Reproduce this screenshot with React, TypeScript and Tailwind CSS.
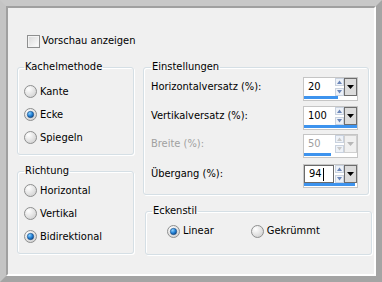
import React from 'react';

function Radio({ checked, disabled }: { checked?: boolean; disabled?: boolean }) {
  return (
    <svg width="13" height="13" viewBox="0 0 13 13" className="shrink-0">
      <defs>
        <radialGradient id="rfill" cx="0.35" cy="0.3" r="0.8">
          <stop offset="0" stopColor="#ffffff" />
          <stop offset="1" stopColor="#cfcfcf" />
        </radialGradient>
        <radialGradient id="rdot" cx="0.35" cy="0.3" r="0.8">
          <stop offset="0" stopColor="#8fd3ff" />
          <stop offset="0.55" stopColor="#1f7fd6" />
          <stop offset="1" stopColor="#0b3f7a" />
        </radialGradient>
      </defs>
      <circle cx="6.5" cy="6.5" r="6" fill="url(#rfill)" stroke={disabled ? '#c4c4c4' : '#8e8f8f'} strokeWidth="1" />
      {checked && <circle cx="6.5" cy="6.5" r="3.2" fill="url(#rdot)" stroke="#1c4a7d" strokeWidth="0.6" />}
    </svg>
  );
}

function RadioRow({ label, checked, className = '' }: { label: string; checked?: boolean; className?: string }) {
  return (
    <div className={`flex items-center gap-[3px] ${className}`}>
      <Radio checked={checked} />
      <span>{label}</span>
    </div>
  );
}

function Spin({ value, bar, disabled, focused }: { value: string; bar: number; disabled?: boolean; focused?: boolean }) {
  return (
    <div className="flex flex-col w-[55px] h-[24px] border border-[#c5c5c5] bg-white">
      <div className="flex h-[19px]">
        <div
          className={`flex-1 flex items-center pl-[4px] ${focused ? 'border border-[#6a6a6a]' : ''} ${disabled ? 'text-[#a0a0a0]' : 'text-black'}`}
        >
          {value}
          {focused && <span className="inline-block w-px h-[13px] bg-black ml-[1px]" />}
        </div>
        <div className="w-[10px] flex flex-col items-center justify-center gap-[2px] bg-white">
          <svg width="9" height="8" viewBox="0 0 9 8">
            <rect x="0.5" y="0.5" width="8" height="7" fill="#eef2f8" stroke="#c9d2df" />
            <path d="M2 6 L4.5 2.5 L7 6 Z" fill={disabled ? '#c8c8c8' : '#6c86b8'} />
          </svg>
          <svg width="9" height="8" viewBox="0 0 9 8">
            <rect x="0.5" y="0.5" width="8" height="7" fill="#eef2f8" stroke="#c9d2df" />
            <path d="M2 2 L4.5 5.5 L7 2 Z" fill={disabled ? '#c8c8c8' : '#6c86b8'} />
          </svg>
        </div>
        <div
          className={`w-[13px] flex items-center justify-center border ${
            disabled ? 'border-[#d0d0d0] bg-[#f0f0f0]' : 'border-[#6d6d6d] bg-[#dcdcdc]'
          }`}
        >
          <svg width="7" height="4" viewBox="0 0 7 4">
            <path d="M0 0 L7 0 L3.5 4 Z" fill={disabled ? '#b8b8b8' : '#000000'} />
          </svg>
        </div>
      </div>
      <div className="flex-1 flex items-end pb-[1px]">
        <div className="h-[3px] bg-[#3d93ee]" style={{ width: bar }} />
      </div>
    </div>
  );
}

function SpinRow({ label, value, bar, disabled, focused, className = '' }: {
  label: string; value: string; bar: number; disabled?: boolean; focused?: boolean; className?: string;
}) {
  return (
    <div className={`flex items-start justify-between ${className}`}>
      <span className={`leading-[19px] ${disabled ? 'text-[#a0a0a0]' : ''}`}>{label}</span>
      <Spin value={value} bar={bar} disabled={disabled} focused={focused} />
    </div>
  );
}

const box = 'border border-[#d5dfe5] rounded-[3px] shadow-[inset_1px_1px_0_#ffffff,1px_1px_0_#ffffff]';

export default function App() {
  return (
    <div className="w-[382px] h-[282px] border-[6px] border-t-[#c8c8c8] border-l-[#c4c4c4] border-r-[#a4a4a4] border-b-[#a4a4a4] bg-[#f0f0f0] text-[11px] leading-[14px] text-black [font-family:'DejaVu_Sans_Condensed','DejaVu_Sans',sans-serif]">
      <div className="h-full border-2 border-t-[#a0a0a0] border-l-[#a0a0a0] border-r-white border-b-white pl-[9px] pr-[2px] pt-[26px]">
        {/* preview checkbox */}
        <div className="flex items-center gap-[2px] ml-[10px] h-[14px]">
          <span className="w-[13px] h-[13px] border border-[#8e8f8f] bg-gradient-to-br from-[#d8d8d8] to-[#ffffff] shadow-[inset_0_0_0_1px_#f4f4f4]" />
          <span>Vorschau anzeigen</span>
        </div>

        <div className="flex mt-[12px]">
          {/* left column */}
          <div className="flex flex-col w-[118px] gap-[9px]">
            <fieldset className={`${box} px-[6px] pt-[6px] pb-[5px]`}>
              <legend className="px-[1px]">Kachelmethode</legend>
              <RadioRow label="Kante" className="h-[23px]" />
              <RadioRow label="Ecke" checked className="h-[23px]" />
              <RadioRow label="Spiegeln" className="h-[23px]" />
            </fieldset>
            <fieldset className={`${box} px-[6px] pt-[1px] pb-[5px]`}>
              <legend className="px-[1px]">Richtung</legend>
              <RadioRow label="Horizontal" className="h-[23px]" />
              <RadioRow label="Vertikal" className="h-[23px]" />
              <RadioRow label="Bidirektional" checked className="h-[23px]" />
            </fieldset>
          </div>

          {/* right column */}
          <div className="flex flex-col ml-[9px] gap-[9px]">
            <fieldset className={`${box} w-[226px] pl-[7px] pr-[10px] pt-[3px] pb-[6px]`}>
              <legend className="px-[1px]">Einstellungen</legend>
              <SpinRow label="Horizontalversatz (%):" value="20" bar={34} />
              <SpinRow label="Vertikalversatz (%):" value="100" bar={53} className="mt-[5px]" />
              <SpinRow label="Breite (%):" value="50" bar={27} disabled className="mt-[4px]" />
              <SpinRow label="Übergang (%):" value="94" bar={51} focused className="mt-[6px]" />
            </fieldset>
            <fieldset className={`${box} w-[227px] ml-[2px] h-[51px] px-[6px]`}>
              <legend className="px-[1px]">Eckenstil</legend>
              <div className="flex items-center h-[26px] pl-[15px]">
                <RadioRow label="Linear" checked />
                <RadioRow label="Gekrümmt" className="ml-[37px]" />
              </div>
            </fieldset>
          </div>
        </div>
      </div>
    </div>
  );
}
